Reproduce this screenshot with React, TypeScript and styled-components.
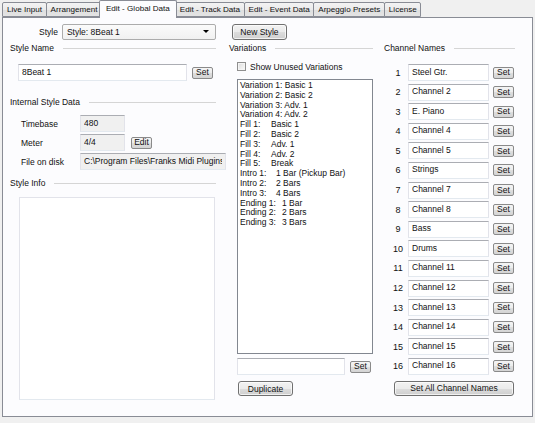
import React from 'react';
import styled, { createGlobalStyle } from 'styled-components';

const GlobalStyle = createGlobalStyle`
	html, body {
		margin: 0;
		padding: 0;
		background: #f0f0f0;
	}
	* {
		box-sizing: border-box;
	}
`;

const tabs = [
	'Live Input',
	'Arrangement',
	'Edit - Global Data',
	'Edit - Track Data',
	'Edit - Event Data',
	'Arpeggio Presets',
	'License'
];

const variations = [
	{ label: 'Variation 1:', value: 'Basic 1', col: 0 },
	{ label: 'Variation 2:', value: 'Basic 2', col: 0 },
	{ label: 'Variation 3:', value: 'Adv. 1', col: 0 },
	{ label: 'Variation 4:', value: 'Adv. 2', col: 0 },
	{ label: 'Fill 1:', value: 'Basic 1', col: 31 },
	{ label: 'Fill 2:', value: 'Basic 2', col: 31 },
	{ label: 'Fill 3:', value: 'Adv. 1', col: 31 },
	{ label: 'Fill 4:', value: 'Adv. 2', col: 31 },
	{ label: 'Fill 5:', value: 'Break', col: 31 },
	{ label: 'Intro 1:', value: '1 Bar (Pickup Bar)', col: 36 },
	{ label: 'Intro 2:', value: '2 Bars', col: 36 },
	{ label: 'Intro 3:', value: '4 Bars', col: 36 },
	{ label: 'Ending 1:', value: '1 Bar', col: 42 },
	{ label: 'Ending 2:', value: '2 Bars', col: 42 },
	{ label: 'Ending 3:', value: '3 Bars', col: 42 }
];

const channels = [
	'Steel Gtr.',
	'Channel 2',
	'E. Piano',
	'Channel 4',
	'Channel 5',
	'Strings',
	'Channel 7',
	'Channel 8',
	'Bass',
	'Drums',
	'Channel 11',
	'Channel 12',
	'Channel 13',
	'Channel 14',
	'Channel 15',
	'Channel 16'
];

function App() {
	const activeTab = 'Edit - Global Data';

	return (
		<Window>
			<GlobalStyle />
			<TabStrip>
				{tabs.map((tab) => (
					<Tab key={tab} active={tab === activeTab}>
						{tab}
					</Tab>
				))}
			</TabStrip>
			<Page>
				<TopRow>
					<Label>Style</Label>
					<Combo>
						<span>Style: 8Beat 1</span>
						<ComboArrow />
					</Combo>
					<Button width={55} height={16} style={{ marginLeft: 16 }}>
						New Style
					</Button>
				</TopRow>

				<Columns>
					<LeftColumn>
						<GroupHeader>
							<span>Style Name</span>
						</GroupHeader>
						<InputRow indent={8} top={11}>
							<TextBox width={169} value="8Beat 1" readOnly />
							<SmallButton>Set</SmallButton>
						</InputRow>

						<GroupHeader top={16}>
							<span>Internal Style Data</span>
						</GroupHeader>
						<FieldGrid>
							<FieldLabel>Timebase</FieldLabel>
							<FieldValue>
								<TextBox width={45} value="480" readOnly disabledLook />
							</FieldValue>
							<FieldLabel>Meter</FieldLabel>
							<FieldValue>
								<TextBox width={45} value="4/4" readOnly disabledLook />
								<SmallButton gap={6}>Edit</SmallButton>
							</FieldValue>
							<FieldLabel>File on disk</FieldLabel>
							<FieldValue>
								<TextBox
									width={146}
									value="C:\Program Files\Franks Midi Plugins\\\Styles\8Beat 1.sty"
									readOnly
									disabledLook
								/>
							</FieldValue>
						</FieldGrid>

						<GroupHeader top={8}>
							<span>Style Info</span>
						</GroupHeader>
						<InfoArea />
					</LeftColumn>

					<MiddleColumn>
						<GroupHeader>
							<span>Variations</span>
						</GroupHeader>
						<CheckRow>
							<CheckBox />
							<span>Show Unused Variations</span>
						</CheckRow>
						<ListBox>
							{variations.map((item) => (
								<ListItem key={item.label}>
									<ItemLabel col={item.col}>{item.label}</ItemLabel>
									{item.col === 0 ? ' ' : ''}
									{item.value}
								</ListItem>
							))}
						</ListBox>
						<InputRow indent={0} top={4}>
							<TextBox width={108} value="" readOnly />
							<SmallButton gap={5}>Set</SmallButton>
						</InputRow>
						<Button width={55} height={15} style={{ marginTop: 6, marginLeft: 1 }}>
							Duplicate
						</Button>
					</MiddleColumn>

					<RightColumn>
						<GroupHeader>
							<span>Channel Names</span>
						</GroupHeader>
						<ChannelList>
							{channels.map((name, index) => (
								<ChannelRow key={index}>
									<ChannelNumber>{index + 1}</ChannelNumber>
									<TextBox width={81} value={name} readOnly />
									<SmallButton gap={4}>Set</SmallButton>
								</ChannelRow>
							))}
						</ChannelList>
						<Button width={120} height={15} style={{ marginTop: 6, marginLeft: 10 }}>
							Set All Channel Names
						</Button>
					</RightColumn>
				</Columns>
			</Page>
		</Window>
	);
}

const Window = styled.div`
	width: 535px;
	height: 423px;
	padding: 0 2px;
	background: #f0f0f0;
	font-family: 'Liberation Sans', Arial, sans-serif;
	font-size: 8.5px;
	color: #111;
	overflow: hidden;
`;

const TabStrip = styled.div`
	display: flex;
	align-items: flex-end;
	height: 17px;
	position: relative;
	z-index: 1;
`;

const Tab = styled.div<{ active: boolean }>`
	height: ${(p) => (p.active ? '18px' : '15px')};
	margin: ${(p) => (p.active ? '0 -2px -1px -2px' : '0 -1px 0 0')};
	padding: ${(p) => (p.active ? '3px 6px 0' : '2px 3.5px 0 4px')};
	border: 1px solid #898c95;
	border-bottom: ${(p) => (p.active ? 'none' : '1px solid #898c95')};
	border-radius: 2px 2px 0 0;
	background: ${(p) =>
		p.active ? '#fcfcfe' : 'linear-gradient(#f3f3f3 0%, #ebebeb 50%, #dedede 51%, #e4e4e4 100%)'};
	font-size: 8.1px;
	white-space: nowrap;
	position: relative;
	z-index: ${(p) => (p.active ? 2 : 0)};
	line-height: 10px;
`;

const Page = styled.div`
	height: 400px;
	border: 1px solid #898c95;
	background: #fcfcfe;
	padding: 5px 0 0 0;
`;

const TopRow = styled.div`
	display: flex;
	align-items: center;
	height: 17px;
	padding-left: 36px;
`;

const Label = styled.span`
	margin-right: 4px;
`;

const Combo = styled.div`
	width: 154px;
	height: 16px;
	display: flex;
	align-items: center;
	justify-content: space-between;
	padding: 0 6px 0 4px;
	border: 1px solid #acacac;
	border-radius: 2px;
	background: linear-gradient(#fbfbfb, #f1f1f1);
`;

const ComboArrow = styled.span`
	width: 0;
	height: 0;
	border-left: 3px solid transparent;
	border-right: 3px solid transparent;
	border-top: 3px solid #000;
`;

const Button = styled.div<{ width: number; height: number }>`
	width: ${(p) => p.width}px;
	height: ${(p) => p.height}px;
	display: flex;
	align-items: center;
	justify-content: center;
	flex-shrink: 0;
	border: 1px solid #707070;
	border-radius: 3px;
	background: linear-gradient(#f2f2f2 0%, #ebebeb 50%, #dddddd 51%, #cfcfcf 100%);
	box-shadow: inset 0 0 0 1px rgba(255, 255, 255, 0.7);
	white-space: nowrap;
`;

const SmallButton = styled.div<{ gap?: number }>`
	height: 12px;
	min-width: 21px;
	margin-left: ${(p) => p.gap ?? 5}px;
	padding: 0 2px;
	display: flex;
	align-items: center;
	justify-content: center;
	border: 1px solid #8a8a8a;
	border-radius: 2px;
	background: linear-gradient(#f4f4f4 0%, #ececec 50%, #dedede 51%, #d4d4d4 100%);
	line-height: 1;
	flex-shrink: 0;
`;

const Columns = styled.div`
	display: flex;
	margin-top: 3px;
	padding-left: 7px;
`;

const Column = styled.div`
	display: flex;
	flex-direction: column;
`;

const LeftColumn = styled(Column)`
	width: 206px;
`;

const MiddleColumn = styled(Column)`
	width: 144px;
	margin-left: 13px;
	padding-left: 8px;

	& > :first-child {
		margin-left: -8px;
	}
`;

const RightColumn = styled(Column)`
	width: 131px;
	margin-left: 11px;
`;

const GroupHeader = styled.div<{ top?: number }>`
	height: 10px;
	display: flex;
	align-items: center;
	margin-top: ${(p) => p.top ?? 0}px;
	white-space: nowrap;

	&::after {
		content: '';
		flex: 1;
		height: 1px;
		margin-left: 9px;
		background: #d5d5d5;
	}
`;

const InputRow = styled.div<{ indent: number; top: number }>`
	display: flex;
	align-items: center;
	margin-left: ${(p) => p.indent}px;
	margin-top: ${(p) => p.top}px;
`;

const TextBox = styled.input<{ width: number; disabledLook?: boolean }>`
	width: ${(p) => p.width}px;
	height: 17px;
	flex-shrink: 0;
	padding: 0 3px 2px;
	font: inherit;
	color: #111;
	border: 1px solid #e2e3ea;
	border-top-color: #abadb3;
	border-bottom-color: #e3e9ef;
	background: ${(p) => (p.disabledLook ? '#f0f0f0' : '#fff')};
	outline: none;
	overflow: hidden;
	text-overflow: clip;
`;

const FieldGrid = styled.div`
	display: grid;
	grid-template-columns: 60px 1fr;
	grid-auto-rows: 17px;
	row-gap: 2px;
	align-items: center;
	margin: 8px 0 0 11px;
`;

const FieldLabel = styled.span``;

const FieldValue = styled.div`
	display: flex;
	align-items: center;
	margin-left: -1px;
`;

const InfoArea = styled.div`
	width: 196px;
	height: 203px;
	margin: 9px 0 0 9px;
	border: 1px solid #e2e3ea;
	border-bottom-color: #e3e9ef;
	background: #fff;
`;

const CheckRow = styled.div`
	display: flex;
	align-items: center;
	gap: 4px;
	height: 11px;
	margin-top: 8px;
`;

const CheckBox = styled.span`
	width: 9px;
	height: 9px;
	border: 1px solid #8f8f8f;
	background: linear-gradient(135deg, #dcdcdc, #fafafa);
	box-shadow: inset 0 0 0 1px #f4f4f4;
`;

const ListBox = styled.div`
	width: 136px;
	height: 275px;
	margin-top: 7px;
	padding: 1px 2px;
	border: 1px solid #828790;
	background: #fff;
`;

const ListItem = styled.div`
	height: 9.8px;
	line-height: 9.8px;
	white-space: pre;
`;

const ItemLabel = styled.span<{ col: number }>`
	display: inline-block;
	min-width: ${(p) => p.col}px;
`;

const ChannelList = styled.div`
	display: flex;
	flex-direction: column;
	gap: 2.6px;
	margin-top: 11px;
`;

const ChannelRow = styled.div`
	display: flex;
	align-items: center;
	height: 17px;
`;

const ChannelNumber = styled.span`
	width: 16px;
	margin-left: 6px;
	margin-right: 2px;
	text-align: center;
	font-size: 9px;
`;

export default App;
